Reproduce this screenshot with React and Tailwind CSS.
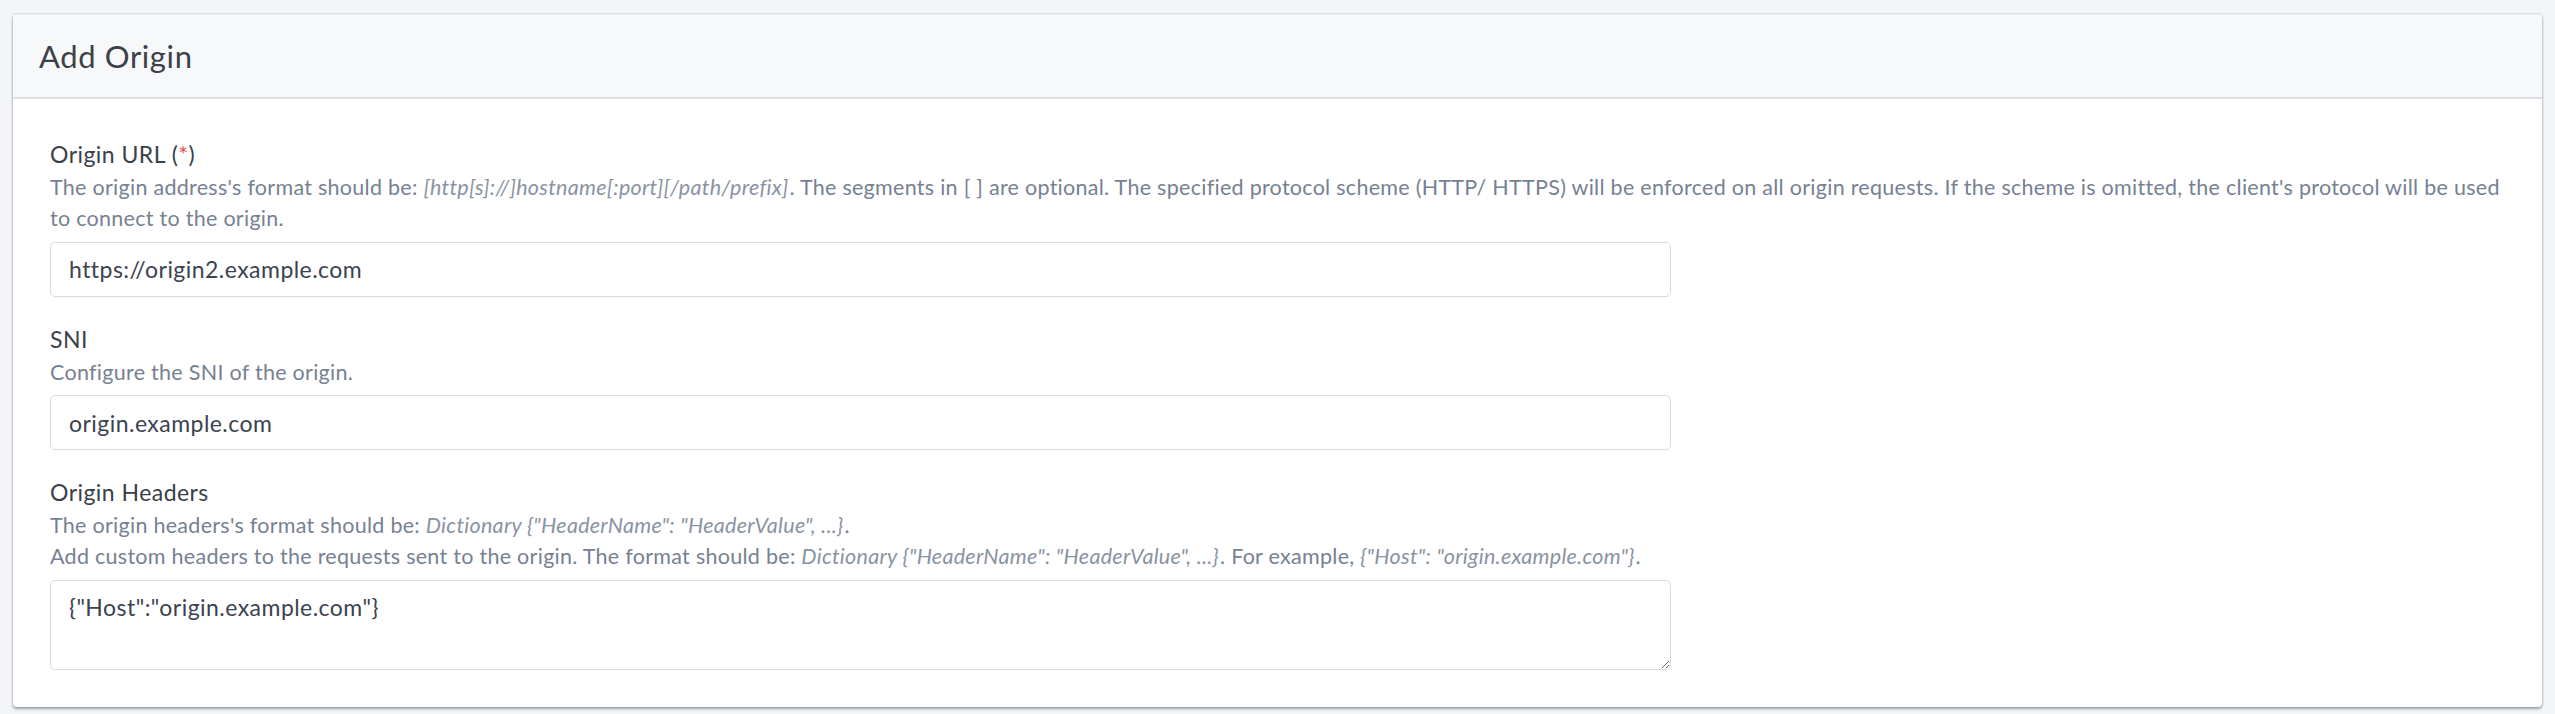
import React from 'react';

const fieldInput =
  'block w-[1621px] h-[55px] px-[18px] bg-white border border-[#d8dbe0] rounded-[5px] text-[23px] tracking-[0.02em] text-[#3c4350] outline-none';

const Field = ({ label, required, children }) => (
  <div className="mb-[26px] last:mb-0">
    <div className="text-[23px] leading-[1.47] tracking-[0.02em] text-[#3a4049]">
      {label}
      {required && (
        <>
          {' ('}
          <span className="text-[#e55353]">*</span>
          {')'}
        </>
      )}
    </div>
    {children}
  </div>
);

const Help = ({ children }) => (
  <div className="text-[21.5px] leading-[1.465] tracking-[0.013em] text-[#768192]">{children}</div>
);

const Em = ({ children }) => <em className="italic pr-[1px] text-[#8a93a2]">{children}</em>;

export default function App() {
  return (
    <div className="min-h-screen bg-[#f4f5f7] px-[13px] pt-[14px] pb-[8px] font-['Lato',sans-serif]">
      <div className="bg-white rounded-[4px] border-t border-[#eceef1] shadow-[0_2px_3px_rgba(60,70,80,0.45),0_0_2px_rgba(60,70,80,0.35)]">
        <div className="h-[84px] flex items-center px-[26px] bg-[#f7f8fa] border-b-2 border-[#dcdfe4]">
          <h2 className="text-[31px] tracking-[0.02em] text-[#3c4048]">Add Origin</h2>
        </div>
        <div className="pl-[37px] pr-[24px] pt-[39px] pb-[37px]">
          <Field label="Origin URL" required>
            <Help>
              The origin address's format should be: <Em>[http[s]://]hostname[:port][/path/prefix]</Em>. The
              segments in [ ] are optional. The specified protocol scheme (HTTP/ HTTPS) will be enforced on all
              origin requests. If the scheme is omitted, the client's protocol will be used to connect to the origin.
            </Help>
            <input className={`${fieldInput} mt-[7px]`} defaultValue="https://origin2.example.com" />
          </Field>
          <Field label="SNI">
            <Help>Configure the SNI of the origin.</Help>
            <input className={`${fieldInput} mt-[7px]`} defaultValue="origin.example.com" />
          </Field>
          <Field label="Origin Headers">
            <Help>
              The origin headers's format should be: <Em>Dictionary {'{"HeaderName": "HeaderValue", ...}'}</Em>.
            </Help>
            <Help>
              Add custom headers to the requests sent to the origin. The format should be:{' '}
              <Em>Dictionary {'{"HeaderName": "HeaderValue", ...}'}</Em>. For example,{' '}
              <Em>{'{"Host": "origin.example.com"}'}</Em>.
            </Help>
            <textarea
              className="block mt-[7px] w-[1621px] h-[90px] px-[18px] py-[9px] bg-white border border-[#d8dbe0] rounded-[5px] text-[23px] leading-[1.5] tracking-[0.02em] text-[#3c4350] outline-none resize-y"
              defaultValue={'{"Host":"origin.example.com"}'}
            />
          </Field>
        </div>
      </div>
    </div>
  );
}
